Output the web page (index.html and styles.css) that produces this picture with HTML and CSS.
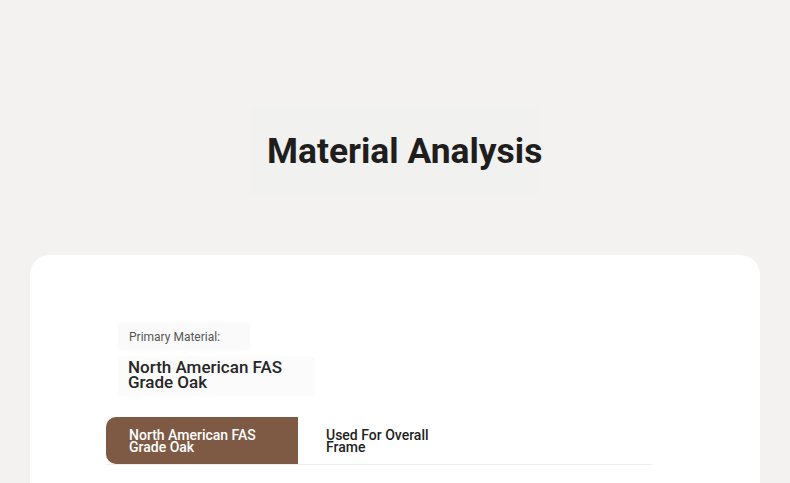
FILE: index.html
```html
<!DOCTYPE html>
<html>
<head>
<meta charset="utf-8">
<link rel="stylesheet" href="styles.css">
</head>
<body>
<header class="hero">
  <h1 class="title">Material Analysis</h1>
</header>
<main class="card">
  <section class="material">
    <div class="primary">
      <div class="label">Primary Material:</div>
      <div class="value">North American FAS<br>Grade Oak</div>
    </div>
    <div class="tabs">
      <div class="tab active"><span>North American FAS<br>Grade Oak</span></div>
      <div class="tab"><span>Used For Overall<br>Frame</span></div>
    </div>
  </section>
</main>
</body>
</html>
```
FILE: styles.css
```css
html, body {
  margin: 0;
  padding: 0;
}
body {
  background: #f3f2f0;
  font-family: Roboto, "Liberation Sans", sans-serif;
  color: #222;
  height: 483px;
  overflow: hidden;
}
.hero {
  display: flex;
  justify-content: center;
  padding-top: 108px;
  padding-bottom: 60px;
}
.title {
  margin: 0;
  background: #f1f1f0;
  padding: 22px 0 22px 16px;
  width: 272px;
  height: 43px;
  font-size: 35.4px;
  line-height: 43px;
  font-weight: 700;
  color: #1f1e1d;
  white-space: nowrap;
}
.card {
  margin: 0 30px;
  background: #fff;
  border-radius: 20px;
  padding: 68px 0 40px 76px;
  min-height: 300px;
}
.material {
  width: 546px;
}
.primary {
  margin-left: 12px;
  width: 197px;
}
.label {
  font-size: 12px;
  color: #555;
  background: #fafafa;
  padding: 7px 11px 6px;
  line-height: 14px;
  width: 110px;
}
.value {
  margin-top: 7px;
  background: #fbfbfb;
  padding: 3px 10px 6px;
  font-size: 17px;
  font-weight: 500;
  line-height: 15px;
  color: #262626;
}
.tabs {
  margin-top: 21px;
  display: flex;
  border-bottom: 1px solid #efefef;
}
.tab {
  width: 192px;
  height: 47px;
  display: flex;
  align-items: flex-start;
  padding-top: 12px;
  padding-left: 23px;
  box-sizing: border-box;
  font-size: 14px;
  font-weight: 500;
  line-height: 12px;
  color: #1f1f1f;
}
.tab.active {
  background: #7e5a45;
  color: #fff;
  border-radius: 10px 0 0 10px;
}
.tab + .tab {
  padding-left: 28px;
}
```
